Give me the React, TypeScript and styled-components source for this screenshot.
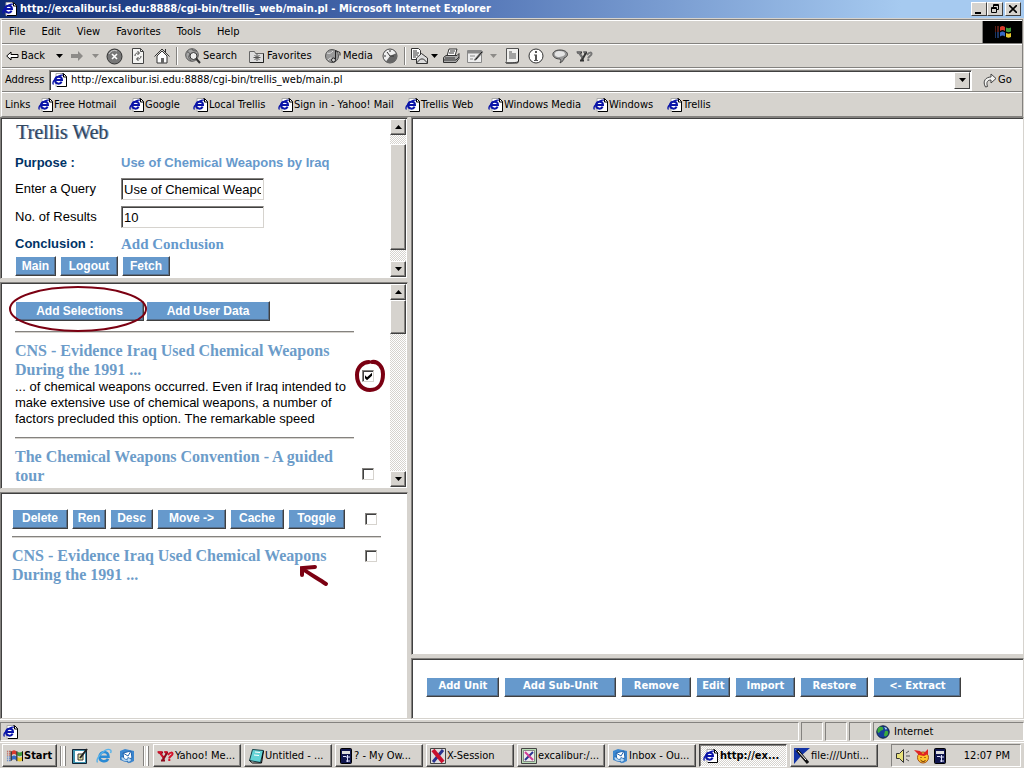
import React from "react";
import styled, { createGlobalStyle } from "styled-components";

const ui = `"DejaVu Sans Condensed", "Noto Sans", sans-serif`;
const arial = `"Liberation Sans", Arial, sans-serif`;
const times = `"Liberation Serif", "Times New Roman", serif`;
const face = "#d6d3ce";
const blue = "#6699cc";

const Global = createGlobalStyle`
  *, *::before, *::after { box-sizing: border-box; }
  body { margin: 0; background: ${face}; font: 11px/14px ${ui}; color: #000; }
  button, input { font: inherit; color: inherit; margin: 0; border-radius: 0; }
  a { color: inherit; text-decoration: none; }
  svg { display: block; flex: none; }
`;

const Window = styled.div`
  height: 100vh;
  display: flex;
  flex-direction: column;
  overflow: hidden;
`;

/* Title bar */
const TitleBar = styled.header`
  flex: none;
  height: 18px;
  display: flex;
  align-items: center;
  padding: 0 3px 0 2px;
  gap: 2px;
  background: linear-gradient(90deg, #0f2c74, #4d6fb2 42%, #a6caf0 88%);
  color: #fff;
`;
const Title = styled.h1`
  flex: 1;
  margin: 0;
  font: bold 11px/16px ${ui};
  white-space: nowrap;
`;
const CaptionButton = styled.button<{ $gap?: boolean }>`
  width: 16px;
  height: 14px;
  padding: 0;
  margin-left: ${(p) => (p.$gap ? "0" : "-2px")};
  display: grid;
  place-items: center;
  background: ${face};
  border: 1px solid;
  border-color: #fff #404040 #404040 #fff;
`;

/* Command bars */
const Bars = styled.div`
  flex: none;
  margin: 1px 1px 0;
  border: 1px solid #84827f;
  border-left-color: #fff;
`;
const Bar = styled.div`
  height: 24px;
  display: flex;
  align-items: center;
  border-top: 1px solid #fff;
  border-bottom: 1px solid #84827f;
  white-space: nowrap;
  &:last-child { border-bottom: 0; }
`;
const MenuList = styled.nav`
  flex: 1;
  display: flex;
  gap: 16px;
  padding-left: 7px;
`;
const MenuButton = styled.button`
  padding: 0;
  border: 0;
  background: none;
`;
const Throbber = styled.div`
  width: 40px;
  height: 22px;
  display: grid;
  place-items: center;
  background: #000;
  border-left: 1px solid #84827f;
`;
const Tool = styled.button<{ $w?: number; $text?: boolean }>`
  width: ${(p) => p.$w ?? 24}px;
  height: 20px;
  padding: 0 0 0 ${(p) => (p.$text ? "4px" : "0")};
  display: flex;
  align-items: center;
  justify-content: ${(p) => (p.$text ? "flex-start" : "center")};
  gap: 2px;
  border: 0;
  background: none;
`;
const ToolDivider = styled.span`
  width: 2px;
  height: 18px;
  margin: 0 3px 0 2px;
  border-left: 1px solid #84827f;
  border-right: 1px solid #fff;
`;
const AddressLabel = styled.label`
  width: 44px;
  margin-left: 3px;
`;
const AddressBox = styled.div`
  flex: 1;
  height: 21px;
  display: flex;
  align-items: center;
  padding: 1px 1px 1px 2px;
  background: #fff;
  border: 1px solid;
  border-color: #84827f #fff #fff #84827f;
  box-shadow: inset 1px 1px #404040;
`;
const AddressInput = styled.input`
  flex: 1;
  min-width: 0;
  padding: 0 3px;
  border: 0;
  background: none;
  outline: 0;
`;
const DropButton = styled.button`
  width: 16px;
  height: 17px;
  padding: 0;
  display: grid;
  place-items: center;
  background: ${face};
  border: 1px solid;
  border-color: #fff #404040 #404040 #fff;
`;
const GoButton = styled.button`
  width: 50px;
  padding: 0 0 0 11px;
  display: flex;
  align-items: center;
  gap: 1px;
  border: 0;
  background: none;
`;
const LinksLabel = styled.span`
  width: 33px;
  margin-left: 3px;
`;
const QuickLink = styled.a<{ $w: number }>`
  width: ${(p) => p.$w}px;
  display: flex;
  align-items: center;
`;

/* Frameset */
const Frameset = styled.main`
  flex: 1;
  display: grid;
  grid-template-columns: 40fr 60fr;
  grid-template-rows: minmax(0, 1fr);
  gap: 3px;
  min-height: 0;
`;
const FrameColumn = styled.div<{ $rows: number[] }>`
  display: grid;
  grid-template-rows: ${(p) => p.$rows.map((r) => `minmax(0, ${r}fr)`).join(" ")};
  gap: 3px;
  min-width: 0;
`;
const Frame = styled.section`
  display: flex;
  min-width: 0;
  min-height: 0;
  overflow: hidden;
  background: #fff;
  border: 1px solid;
  border-color: #84827f ${face} ${face} #84827f;
  box-shadow: inset 1px 1px #404040;
`;
const FrameBody = styled.div<{ $pad: string }>`
  flex: 1;
  min-width: 0;
  padding: ${(p) => p.$pad};
  font-family: ${arial};
`;

/* Scroll bar */
const ScrollTrack = styled.div`
  width: 16px;
  margin: 1px 1px 1px 0;
  display: flex;
  flex-direction: column;
  background: repeating-conic-gradient(#fff 0 25%, ${face} 0 50%) 0 0 / 2px 2px;
`;
const ScrollButton = styled.button`
  height: 16px;
  padding: 0;
  display: grid;
  place-items: center;
  background: ${face};
  border: 1px solid;
  border-color: #fff #404040 #404040 #fff;
  box-shadow: inset -1px -1px #84827f;
`;
const ScrollSpace = styled.div<{ $grow: number }>`
  flex: ${(p) => p.$grow} 0 0;
`;
const ScrollThumb = styled.div<{ $grow: number }>`
  flex: ${(p) => p.$grow} 0 0;
  background: ${face};
  border: 1px solid;
  border-color: #fff #404040 #404040 #fff;
  box-shadow: inset -1px -1px #84827f;
`;

/* Page controls */
const Logo = styled.div`
  height: 31px;
  padding-left: 1px;
  font: 20px/24px ${times};
  color: #33485f;
  text-shadow: 1px 0 #8aa6c8;
`;
const FieldRow = styled.div<{ $h: number }>`
  display: flex;
  align-items: center;
  height: ${(p) => p.$h}px;
  font-size: 13px;
  line-height: 16px;
`;
const FieldLabel = styled.label<{ $strong?: boolean }>`
  width: 106px;
  font-weight: ${(p) => (p.$strong ? "bold" : "normal")};
  color: ${(p) => (p.$strong ? "#003366" : "#000")};
`;
const FieldLink = styled.a<{ $serif?: boolean }>`
  color: ${blue};
  font: bold ${(p) => (p.$serif ? `15px/16px ${times}` : `13px/16px ${arial}`)};
`;
const TextField = styled.input`
  width: 143px;
  height: 22px;
  padding: 0 2px;
  background: #fff;
  border: 1px solid;
  border-color: #84827f ${face} ${face} #84827f;
  box-shadow: inset 1px 1px #404040;
  outline: 0;
`;
const ButtonRow = styled.div<{ $gap: number }>`
  display: flex;
  align-items: center;
  gap: ${(p) => p.$gap}px;
`;
const PageButton = styled.button<{ $w: number; $wide?: boolean }>`
  width: ${(p) => p.$w}px;
  height: 20px;
  padding: 0 0 1px;
  color: #fff;
  background: ${blue};
  font: bold ${(p) => (p.$wide ? `10px/14px "DejaVu Sans", sans-serif` : `12px/14px ${arial}`)};
  white-space: nowrap;
  border: 1px solid;
  border-color: #fff #404040 #404040 #fff;
  box-shadow: inset -1px -1px #55708f;
`;
const Rule = styled.hr<{ $w: number; $tight?: boolean }>`
  width: ${(p) => p.$w}px;
  height: 2px;
  margin: ${(p) => (p.$tight ? 7 : 10)}px 0 8px;
  border: 0;
  border-top: 1px solid #84827f;
  border-bottom: 1px solid ${face};
`;
const Result = styled.article`
  display: flex;
  align-items: flex-start;
  gap: 8px;
`;
const ResultText = styled.div<{ $w: number }>`
  width: ${(p) => p.$w}px;
`;
const Heading = styled.h2`
  margin: 0;
  font: bold 16px/19px ${times};
  color: #6c9cc9;
`;
const Snippet = styled.p`
  margin: 0;
  font-size: 13px;
  line-height: 16px;
`;
const CheckCell = styled.div<{ $h: number }>`
  height: ${(p) => p.$h}px;
  display: flex;
  align-items: center;
`;
const CheckBox = styled.input.attrs({ type: "checkbox" })`
  appearance: none;
  display: block;
  width: 12px;
  height: 12px;
  background: #fff;
  border: 1px solid;
  border-color: #84827f ${face} ${face} #84827f;
  box-shadow: inset 1px 1px #404040;
  ${ButtonRow} > & { margin-left: 16px; }
  &:checked::after {
    content: "";
    display: block;
    width: 10px;
    height: 10px;
    background: #000;
    clip-path: polygon(20% 40%, 40% 60%, 90% 15%, 90% 45%, 40% 90%, 20% 70%);
  }
`;

/* Hand-drawn marks over the page */
const Marked = styled.span`
  position: relative;
  display: inline-flex;
`;
const Mark = styled.svg<{ $x: number; $y: number }>`
  position: absolute;
  left: ${(p) => p.$x}px;
  top: ${(p) => p.$y}px;
  overflow: visible;
  pointer-events: none;
  fill: none;
  stroke: #7b0012;
`;

/* Status bar and taskbar */
const StatusBar = styled.footer`
  flex: none;
  height: 23px;
  display: flex;
  gap: 2px;
  padding: 2px 0 1px;
  border-top: 1px solid #fff;
`;
const StatusCell = styled.div<{ $w?: number }>`
  flex: ${(p) => (p.$w ? `0 0 ${p.$w}px` : "1")};
  display: flex;
  align-items: center;
  gap: 4px;
  padding-left: 2px;
  border: 1px solid;
  border-color: #84827f #fff #fff #84827f;
`;
const Taskbar = styled.footer`
  flex: none;
  height: 26px;
  display: flex;
  align-items: center;
  padding: 1px 3px 1px 2px;
  border-top: 1px solid #fff;
`;
const TaskButton = styled.button<{ $active?: boolean; $start?: boolean }>`
  flex: 0 1 ${(p) => (p.$start ? 55 : 88)}px;
  min-width: 0;
  height: 23px;
  padding: 0 3px;
  display: flex;
  align-items: center;
  gap: 1px;
  font-weight: ${(p) => (p.$active || p.$start ? "bold" : "normal")};
  white-space: nowrap;
  background: ${(p) =>
    p.$active ? `repeating-conic-gradient(#fff 0 25%, ${face} 0 50%) 0 0 / 2px 2px` : face};
  border: 1px solid;
  border-color: ${(p) => (p.$active ? "#404040 #fff #fff #404040" : "#fff #404040 #404040 #fff")};
  box-shadow: ${(p) => (p.$active ? "inset 1px 1px #84827f" : "inset -1px -1px #84827f")};
`;
const Grip = styled.span`
  flex: none;
  width: 6px;
  height: 20px;
  margin-left: 3px;
  border: 0 solid;
  border-width: 0 1px;
  border-color: #84827f;
  box-shadow: inset 1px 0 #fff, inset -2px 0 #fff;
`;
const QuickLaunch = styled.div`
  flex: none;
  width: 74px;
  display: flex;
  gap: 7px;
  padding-left: 6px;
`;
const TaskList = styled.div`
  flex: 1;
  min-width: 0;
  display: flex;
  gap: 3px;
  padding-left: 4px;
`;
const Tray = styled.div`
  flex: none;
  width: 130px;
  height: 23px;
  display: flex;
  align-items: center;
  gap: 3px;
  padding-left: 3px;
  border: 1px solid;
  border-color: #84827f #fff #fff #84827f;
`;
const Clock = styled.time`
  margin-left: auto;
  padding-right: 10px;
`;

const Down = ({ color = "#000" }: { color?: string }) => (
  <svg width="7" height="4" viewBox="0 0 7 4"><path d="M0 0h7L3.5 4z" fill={color} /></svg>
);
const Up = () => (
  <svg width="7" height="4" viewBox="0 0 7 4"><path d="M0 4h7L3.5 0z" /></svg>
);
const PageE = () => (
  <svg width="16" height="16" viewBox="0 0 16 16">
    <path d="M4 1.500h7.500l3 3v10H4z" fill="#fff" stroke="#aaa" />
    <path d="M10.500 1.500h1l3 3v10H5M11.500 2v3h3" fill="none" stroke="#000" />
    <path d="M3 8h7c0-4.500-6.500-4.500-7 0 0 4.500 5.500 4.500 6.600 1.700" fill="none" stroke="#0a14a8" strokeWidth="2" />
    <path d="M1.500 12.500C-1 10 6.500 2 11 3.200" fill="none" stroke="#0a14a8" strokeWidth="1.300" />
  </svg>
);
const BigE = () => (
  <svg width="16" height="16" viewBox="0 0 16 16" fill="none" stroke="#2a8ad4">
    <path d="M3.500 8.800h9c0-6.500-8.500-6.500-9 0 0 5.500 7 5.500 8.500 2" strokeWidth="2.600" />
    <path d="M1.500 14.500C-1 10 10-1 14.500 2c1 .8.500 2 0 3" stroke="#57b2ea" strokeWidth="1.400" />
  </svg>
);
const Flag = ({ w = 18 }: { w?: number }) => (
  <svg width={w} height="16" viewBox="0 0 18 16">
    <path d="M6 3c2-1.500 3-1.500 5 0v4C9 5.500 8 5.500 6 7z" fill="#d83a2c" />
    <path d="M12 3.500c2 1 3 1 5 0v4c-2 1-3 1-5 0z" fill="#3f9c3b" />
    <path d="M6 8.500c2-1.500 3-1.500 5 0v4c-2-1.500-3-1.500-5 0z" fill="#3569c4" />
    <path d="M12 9c2 1 3 1 5 0v4c-2 1-3 1-5 0z" fill="#e6c62d" />
    <path d="M1 3h1m1 0h2M1 5h1m1 0h2M1 7h1m1 0h2" stroke="#b0382c" />
    <path d="M1 9h1m1 0h2M1 11h1m1 0h2M1 13h1m1 0h2" stroke="#3569c4" />
    <path d="M5.500 3v10M11.500 3v10.500M17.500 3v10.500" stroke="#000" />
  </svg>
);
const BackArrow = () => (
  <svg width="13" height="12" viewBox="0 0 13 12"><path d="M.7 6 5 2v2.500h7v3H5V10z" fill="#fff" stroke="#000" /></svg>
);
const ForwardArrow = () => (
  <svg width="14" height="12" viewBox="0 0 14 12"><path d="M13 6 8 1v3H1v4h7v3z" fill="#8d8b88" /></svg>
);
const Stop = () => (
  <svg width="17" height="17" viewBox="0 0 17 17">
    <circle cx="8.500" cy="8.500" r="7.500" fill="#777" stroke="#333" />
    <path d="M3 6a6 6 0 0 1 8-3" stroke="#ccc" fill="none" />
    <path d="m6 6 5 5m0-5-5 5" stroke="#fff" strokeWidth="1.600" />
  </svg>
);
const Refresh = () => (
  <svg width="16" height="16" viewBox="0 0 16 16" fill="none" stroke="#444">
    <path d="M2.500.5h8l3 3v12h-11z" fill="#f4f4f2" />
    <path d="M10.500.5v3h3M5 8c0-3 2-3 4-3M7.500 3l2 2-2 2M11 8c0 3-2 3-4 3m1.500-2-2 2 2 2" />
  </svg>
);
const Home = () => (
  <svg width="16" height="16" viewBox="0 0 16 16">
    <path d="M3 8v7h10V8L8 3z" fill="#fff" stroke="#333" />
    <path d="M.5 8.500 8 1l7.500 7.500M11.500 1v3.500" fill="none" stroke="#333" />
    <path d="M7 10h3v5H7z" fill="#666" />
  </svg>
);
const SearchIcon = () => (
  <svg width="16" height="16" viewBox="0 0 16 16">
    <circle cx="7" cy="7" r="6.300" fill="#a5a5a5" stroke="#555" />
    <path d="M2 4c3 0 3 2 2 4s1 3 2 5M7 1c0 2 3 2 5 2" stroke="#555" fill="none" />
    <circle cx="8.500" cy="8" r="3.500" fill="#eee" stroke="#333" />
    <path d="m11 10.500 4 4.500" stroke="#333" strokeWidth="2" />
  </svg>
);
const FolderStar = () => (
  <svg width="16" height="16" viewBox="0 0 16 16">
    <path d="M.5 3.500h5l1 2h8v9H.5z" fill="#ddd" stroke="#666" />
    <path d="M14.500 5.500v9H1" fill="none" stroke="#222" />
    <path d="M8 6v7M4.500 9.500h7M5.500 7l5 5m0-5-5 5" stroke="#555" />
  </svg>
);
const MediaIcon = () => (
  <svg width="16" height="16" viewBox="0 0 16 16">
    <circle cx="7" cy="8" r="6.500" fill="#999" stroke="#555" />
    <path d="M2 5c3 1 4 0 6-2M3 12c2-3 4-2 6 0" stroke="#ddd" fill="none" />
    <path d="M10.500 12V2.500l4.500 2v3" fill="none" stroke="#222" />
    <circle cx="8.500" cy="12" r="2" fill="#ccc" stroke="#222" />
  </svg>
);
const HistoryIcon = () => (
  <svg width="16" height="16" viewBox="0 0 16 16">
    <circle cx="8" cy="8" r="7" fill="#eee" stroke="#444" />
    <path d="m8 8 6.500-3c1.500 5-1.500 10-6.500 10-2 0-3-.5-4-1.500z" fill="#666" />
    <path d="M8 8 5 4m3 4h4M8 2v2M2 8h2" stroke="#333" fill="none" />
  </svg>
);
const MailIcon = () => (
  <svg width="17" height="16" viewBox="0 0 17 16" stroke="#333">
    <path d="M.5.500h7l2 2v9h-9z" fill="#fff" />
    <path d="M2 3h4M2 5h6M2 7h5M2 9h3" />
    <path d="m5.500 10 5-4.500 6 4.500v5.500h-11z" fill="#ddd" />
    <path d="m5.500 15 4-4h3l4 4" fill="none" />
  </svg>
);
const Printer = () => (
  <svg width="17" height="16" viewBox="0 0 17 16" stroke="#333">
    <path d="m4 8 2-7h8l-2 7z" fill="#fff" />
    <path d="M7 3h5M6 5h5" />
    <path d="M.5 9.500 3 7.500h11l2-2v5l-3 4H.5z" fill="#aaa" />
    <path d="M1 12h12l3-3M2 10h10" fill="none" />
  </svg>
);
const EditIcon = () => (
  <svg width="17" height="16" viewBox="0 0 17 16" stroke="#888">
    <path d="M.5 2.500h14v12H.5z" fill="#eee" />
    <path d="M1 4h13" strokeWidth="3" />
    <path d="M3 8h5M3 11h3m1 1 8-9 1 1-7 8z" />
  </svg>
);
const DocIcon = () => (
  <svg width="16" height="16" viewBox="0 0 16 16" stroke="#555">
    <path d="M2.500.5h12v12.500c0 2-12 2.500-13 1.500 1-1 1-1 1-2z" fill="#f0f0ee" />
    <path d="M5 4h3m-3 2h7M5 8h7m-7 2h7" />
    <path d="M14.500 1v12.500l-1 1.500H2" fill="none" stroke="#222" />
  </svg>
);
const InfoIcon = () => (
  <svg width="16" height="16" viewBox="0 0 16 16">
    <circle cx="8" cy="8" r="7" fill="#fff" stroke="#333" />
    <path d="M7 3h2v2H7zM6 6.500h3V12h1v1H6v-1h1V7.500H6z" fill="#555" />
  </svg>
);
const BubbleIcon = () => (
  <svg width="17" height="16" viewBox="0 0 17 16">
    <path d="M8 2c8 0 10 6 4 8 0 2-1 3-4 5 1-2 1-3 0-4-9 0-10-9 0-9z" fill="#999" stroke="#444" />
    <path d="M7 3C2 3 1 8 6 9c3 0 7-1 7-3s-2-3-6-3z" fill="#e4e4e4" />
  </svg>
);
const YIcon = ({ color = "#777", shade = "#333" }: { color?: string; shade?: string }) => (
  <svg width="17" height="16" viewBox="0 0 17 16" fill="none">
    <path d="M1 4.500h5m2 0h3M3 5l4 5 3-5M6.500 9.500l-.5 3m-2 0h4" stroke={shade} strokeWidth="2" />
    <path d="M.5 4h4.500m2 0h3M2.500 4.500l4 5" stroke={color} strokeWidth="1.500" />
    <path d="M11 7c2-3 5-3 4.500-1 0 1.500-2.500 2-3.500 4.500m-.700 1.500h2" stroke={color} strokeWidth="2" />
  </svg>
);
const GoIcon = () => (
  <svg width="14" height="15" viewBox="0 0 14 15"><path d="M2.500 14C-1 8 3 4 8 4V1l5 4.500L8 10V7C4.500 7 3 9 4.500 13.500z" fill="#f4f4f2" stroke="#444" /></svg>
);
const NoteIcon = () => (
  <svg width="17" height="16" viewBox="0 0 17 16">
    <path d="M.5 1.500h14v14H.5z" fill="#3d92ae" stroke="#123" />
    <path d="M3 3h10v11H3z" fill="#fff" />
    <path d="M6 6h5v6H6z" fill="#e9e5a8" stroke="#333" />
    <path d="m8 10 7-9" stroke="#222" strokeWidth="2" />
  </svg>
);
const OutlookIcon = () => (
  <svg width="16" height="16" viewBox="0 0 16 16">
    <path d="m1 3 5-2 9 2v10l-4 2-10-3z" fill="#3b87d0" />
    <path d="m4 5 8-2 1 7-8 2z" fill="#fff" stroke="#2465ad" />
    <path d="m4 5 5 3 3-5" fill="none" stroke="#2465ad" />
    <path d="M2 9c0 4 4 5 7 4v2l4-3-4-3v2c-2 1-4 0-5-2z" fill="#b9dcf7" stroke="#2465ad" strokeWidth=".6" />
  </svg>
);
const NotepadIcon = () => (
  <svg width="16" height="16" viewBox="0 0 16 16">
    <path d="m4.500 1.500 11 1-3 12-11-2z" fill="#63d3d6" stroke="#123f46" />
    <path d="m7 4 5 .5M6 7l5 .500" stroke="#fff" />
    <path d="m1.500 12.500 3 2.500h9l2-12" fill="none" stroke="#000" />
  </svg>
);
const CalcIcon = () => (
  <svg width="14" height="16" viewBox="0 0 14 16">
    <rect x="1.500" y=".5" width="11" height="15" rx="1" fill="#10164e" stroke="#000" />
    <path d="M3 3h8v3H3z" fill="#ddd" />
    <path d="M4 8.500h3M8.500 7v7M7 9h4M7 13h4" stroke="#dfe2ff" />
  </svg>
);
const XIcon = ({ pale = false }: { pale?: boolean }) => (
  <svg width="16" height="16" viewBox="0 0 16 16">
    <path d="M.5.5h15v15H.5z" fill={pale ? "#b6dcb4" : "#ddd"} stroke="#444" />
    {pale && <path d="M2.500 2.500h11v11h-11z" fill="#eee" stroke="#888" />}
    <path d={pale ? "M12 4 4 12" : "M13 2 3 14"} stroke="#29338f" strokeWidth={pale ? 2 : 3} />
    <path d={pale ? "m4 4 8 8" : "m3 2 10 12"} stroke={pale ? "#cf3c93" : "#c8102e"} strokeWidth={pale ? 2 : 4} />
  </svg>
);
const BrushIcon = () => (
  <svg width="16" height="16" viewBox="0 0 16 16">
    <path d="M0 0h16L8 7z M0 0v16l7-8z" fill="#1233a5" />
    <path d="m3 2 11 13" stroke="#111" strokeWidth="3" />
    <path d="m4 3 8 9" stroke="#fff" />
  </svg>
);
const GlobeIcon = () => (
  <svg width="14" height="14" viewBox="0 0 14 14">
    <circle cx="7" cy="7" r="6.200" fill="#173e9c" stroke="#0c1d3d" />
    <path d="M3 2c3-1 5 0 4 3-3 0-3 3-5 3C1 6 1 4 3 2zm6 4c2-1 4 0 3 3-1 3-4 3-4 1z" fill="#3cab3c" />
    <path d="m8 2 3 1-1 2z" fill="#bfe7f5" />
  </svg>
);
const SpeakerIcon = () => (
  <svg width="16" height="16" viewBox="0 0 16 16">
    <path d="M1.500 5.500h3l4-4v13l-4-4h-3z" fill="#e7e07a" stroke="#333" />
    <path d="m11 5 3-2m-3 5h4m-4 3 3 2" stroke="#555" />
  </svg>
);
const SmileyIcon = () => (
  <svg width="16" height="16" viewBox="0 0 16 16">
    <circle cx="9" cy="9.500" r="5.500" fill="#ffc52b" stroke="#a4511a" />
    <path d="m0 2 6 1 3 3 5-5v5l-4 2-5-1z" fill="#e02424" />
    <path d="M7 9v1m4-1v1M6.500 12c2 2 4 2 5 0" stroke="#5c1c00" fill="none" />
  </svg>
);

const quickLinks: [string, number][] = [
  ["Free Hotmail", 91],
  ["Google", 64],
  ["Local Trellis", 85],
  ["Sign in - Yahoo! Mail", 127],
  ["Trellis Web", 83],
  ["Windows Media", 105],
  ["Windows", 74],
  ["Trellis", 60],
];

const tasks: { text: string; icon: React.ReactNode; active?: boolean }[] = [
  { text: "Yahoo! Me...", icon: <YIcon color="#d3122a" shade="#8c0a1c" /> },
  { text: "Untitled - ...", icon: <NotepadIcon /> },
  { text: "? - My Ow...", icon: <CalcIcon /> },
  { text: "X-Session", icon: <XIcon /> },
  { text: "excalibur:/...", icon: <XIcon pale /> },
  { text: "Inbox - Ou...", icon: <OutlookIcon /> },
  { text: "http://ex...", icon: <PageE />, active: true },
  { text: "file:///Unti...", icon: <BrushIcon /> },
];

const unitButtons: [string, number][] = [
  ["Add Unit", 73],
  ["Add Sub-Unit", 112],
  ["Remove", 70],
  ["Edit", 34],
  ["Import", 60],
  ["Restore", 68],
  ["<- Extract", 88],
];

const itemButtons: [string, number][] = [
  ["Delete", 56],
  ["Ren", 34],
  ["Desc", 43],
  ["Move ->", 69],
  ["Cache", 54],
  ["Toggle", 57],
];

function ScrollBar({ before, thumb, after }: { before: number; thumb: number; after: number }) {
  return (
    <ScrollTrack>
      <ScrollButton aria-label="Scroll up"><Up /></ScrollButton>
      <ScrollSpace $grow={before} />
      <ScrollThumb $grow={thumb} />
      <ScrollSpace $grow={after} />
      <ScrollButton aria-label="Scroll down"><Down /></ScrollButton>
    </ScrollTrack>
  );
}

export default function App() {
  return (
    <Window>
      <Global />
      <TitleBar>
        <PageE />
        <Title>http://excalibur.isi.edu:8888/cgi-bin/trellis_web/main.pl - Microsoft Internet Explorer</Title>
        <CaptionButton aria-label="Minimize">
          <svg width="10" height="9" viewBox="0 0 10 9"><path d="M1 7h6v2H1z" /></svg>
        </CaptionButton>
        <CaptionButton aria-label="Restore">
          <svg width="10" height="10" viewBox="0 0 10 10" fill="none" stroke="#000">
            <path d="M3.500 3V.5h5v5H7M3 1.500h6M1.500 3.500h5v5h-5zM1 4.500h6" />
          </svg>
        </CaptionButton>
        <CaptionButton aria-label="Close" $gap>
          <svg width="8" height="8" viewBox="0 0 8 8"><path d="m0 0 8 8M8 0 0 8" stroke="#000" strokeWidth="1.600" /></svg>
        </CaptionButton>
      </TitleBar>

      <Bars>
        <Bar>
          <MenuList>
            {["File", "Edit", "View", "Favorites", "Tools", "Help"].map((m) => (
              <MenuButton key={m}>{m}</MenuButton>
            ))}
          </MenuList>
          <Throbber><Flag /></Throbber>
        </Bar>
        <Bar>
          <Tool $w={51} $text><BackArrow />Back</Tool>
          <Tool $w={12} aria-label="Back history"><Down /></Tool>
          <Tool $w={23} aria-label="Forward"><ForwardArrow /></Tool>
          <Tool $w={14} aria-label="Forward history"><Down color="#8d8b88" /></Tool>
          <Tool aria-label="Stop"><Stop /></Tool>
          <Tool aria-label="Refresh"><Refresh /></Tool>
          <Tool aria-label="Home"><Home /></Tool>
          <ToolDivider />
          <Tool $w={64} $text><SearchIcon />Search</Tool>
          <Tool $w={76} $text><FolderStar />Favorites</Tool>
          <Tool $w={57} $text><MediaIcon />Media</Tool>
          <Tool aria-label="History"><HistoryIcon /></Tool>
          <ToolDivider />
          <Tool $w={20} aria-label="Mail"><MailIcon /></Tool>
          <Tool $w={10} aria-label="Mail options"><Down /></Tool>
          <Tool aria-label="Print"><Printer /></Tool>
          <Tool aria-label="Edit page"><EditIcon /></Tool>
          <Tool $w={13} aria-label="Edit options"><Down color="#8d8b88" /></Tool>
          <Tool aria-label="Notes"><DocIcon /></Tool>
          <Tool aria-label="Information"><InfoIcon /></Tool>
          <Tool aria-label="Discuss"><BubbleIcon /></Tool>
          <Tool aria-label="Messenger"><YIcon /></Tool>
        </Bar>
        <Bar>
          <AddressLabel htmlFor="address">Address</AddressLabel>
          <AddressBox>
            <PageE />
            <AddressInput id="address" defaultValue="http://excalibur.isi.edu:8888/cgi-bin/trellis_web/main.pl" />
            <DropButton aria-label="Show addresses"><Down /></DropButton>
          </AddressBox>
          <GoButton><GoIcon />Go</GoButton>
        </Bar>
        <Bar>
          <LinksLabel>Links</LinksLabel>
          {quickLinks.map(([text, w]) => (
            <QuickLink key={text} href="#" $w={w}><PageE />{text}</QuickLink>
          ))}
        </Bar>
      </Bars>

      <Frameset>
        <FrameColumn $rows={[162, 206, 227]}>
          <Frame>
            <FrameBody $pad="2px 0 0 14px">
              <Logo>Trellis Web</Logo>
              <FieldRow $h={24}>
                <FieldLabel as="span" $strong>Purpose :</FieldLabel>
                <FieldLink href="#">Use of Chemical Weapons by Iraq</FieldLink>
              </FieldRow>
              <FieldRow $h={28}>
                <FieldLabel htmlFor="query">Enter a Query</FieldLabel>
                <TextField id="query" defaultValue="Use of Chemical Weapons by Iraq" />
              </FieldRow>
              <FieldRow $h={28}>
                <FieldLabel htmlFor="count">No. of Results</FieldLabel>
                <TextField id="count" defaultValue="10" />
              </FieldRow>
              <FieldRow $h={25}>
                <FieldLabel as="span" $strong>Conclusion :</FieldLabel>
                <FieldLink href="#" $serif>Add Conclusion</FieldLink>
              </FieldRow>
              <ButtonRow $gap={4}>
                <PageButton $w={41}>Main</PageButton>
                <PageButton $w={58}>Logout</PageButton>
                <PageButton $w={48}>Fetch</PageButton>
              </ButtonRow>
            </FrameBody>
            <ScrollBar before={9} thumb={106} after={11} />
          </Frame>

          <Frame>
            <FrameBody $pad="18px 0 0 14px">
              <ButtonRow $gap={2}>
                <Marked>
                  <PageButton $w={129}>Add Selections</PageButton>
                  <Mark $x={-6} $y={-14} width="138" height="45" viewBox="0 0 138 45" strokeWidth="2">
                    <ellipse cx="69" cy="22" rx="68" ry="22" />
                  </Mark>
                </Marked>
                <PageButton $w={124}>Add User Data</PageButton>
              </ButtonRow>
              <Rule $w={339} />
              <Result>
                <ResultText $w={339}>
                  <Heading><a href="#">CNS - Evidence Iraq Used Chemical Weapons During the 1991 ...</a></Heading>
                  <Snippet>
                    ... of chemical weapons occurred. Even if Iraq intended to make extensive use of chemical
                    weapons, a number of factors precluded this option. The remarkable speed
                  </Snippet>
                </ResultText>
                <CheckCell $h={70}>
                  <Marked>
                    <CheckBox aria-label="Select CNS evidence" defaultChecked />
                    <Mark $x={-7} $y={-11} width="30" height="34" viewBox="0 0 30 34" strokeWidth="4">
                      <path d="M14 3C8 3 2 8 2 16c0 9 5 15 13 15 9 0 13-7 13-16C28 8 23 2 17 3" strokeLinecap="round" />
                    </Mark>
                  </Marked>
                </CheckCell>
              </Result>
              <Rule $w={339} />
              <Result>
                <ResultText $w={339}>
                  <Heading><a href="#">The Chemical Weapons Convention - A guided tour</a></Heading>
                </ResultText>
                <CheckCell $h={54}><CheckBox aria-label="Select convention tour" /></CheckCell>
              </Result>
            </FrameBody>
            <ScrollBar before={0} thumb={32} after={140} />
          </Frame>

          <Frame>
            <FrameBody $pad="16px 0 0 11px">
              <ButtonRow $gap={4}>
                {itemButtons.map(([text, w]) => (
                  <PageButton key={text} $w={w}>{text}</PageButton>
                ))}
                <CheckBox aria-label="Select all" />
              </ButtonRow>
              <Rule $w={369} $tight />
              <Result>
                <ResultText $w={345}>
                  <Marked>
                    <Heading><a href="#">CNS - Evidence Iraq Used Chemical Weapons During the 1991 ...</a></Heading>
                    <Mark $x={288} $y={19} width="28" height="22" viewBox="0 0 28 22" strokeWidth="4" strokeLinecap="round">
                      <path d="M2 10V3l13-1M3 4c5 4 14 9 23 15" />
                    </Mark>
                  </Marked>
                </ResultText>
                <CheckCell $h={20}><CheckBox aria-label="Select saved item" /></CheckCell>
              </Result>
            </FrameBody>
          </Frame>
        </FrameColumn>

        <FrameColumn $rows={[537, 61]}>
          <Frame />
          <Frame>
            <FrameBody $pad="18px 0 0 14px">
              <ButtonRow $gap={5}>
                {unitButtons.map(([text, w]) => (
                  <PageButton key={text} $w={w} $wide>{text}</PageButton>
                ))}
              </ButtonRow>
            </FrameBody>
          </Frame>
        </FrameColumn>
      </Frameset>

      <StatusBar>
        <StatusCell><PageE /></StatusCell>
        <StatusCell $w={22} />
        <StatusCell $w={22} />
        <StatusCell $w={22} />
        <StatusCell $w={151}><GlobeIcon />Internet</StatusCell>
      </StatusBar>

      <Taskbar>
        <TaskButton $start><Flag w={17} />Start</TaskButton>
        <Grip />
        <QuickLaunch><NoteIcon /><BigE /><OutlookIcon /></QuickLaunch>
        <Grip />
        <TaskList>
          {tasks.map((t) => (
            <TaskButton key={t.text} $active={t.active}>{t.icon}{t.text}</TaskButton>
          ))}
        </TaskList>
        <Tray>
          <SpeakerIcon /><SmileyIcon /><CalcIcon />
          <Clock>12:07 PM</Clock>
        </Tray>
      </Taskbar>
    </Window>
  );
}
